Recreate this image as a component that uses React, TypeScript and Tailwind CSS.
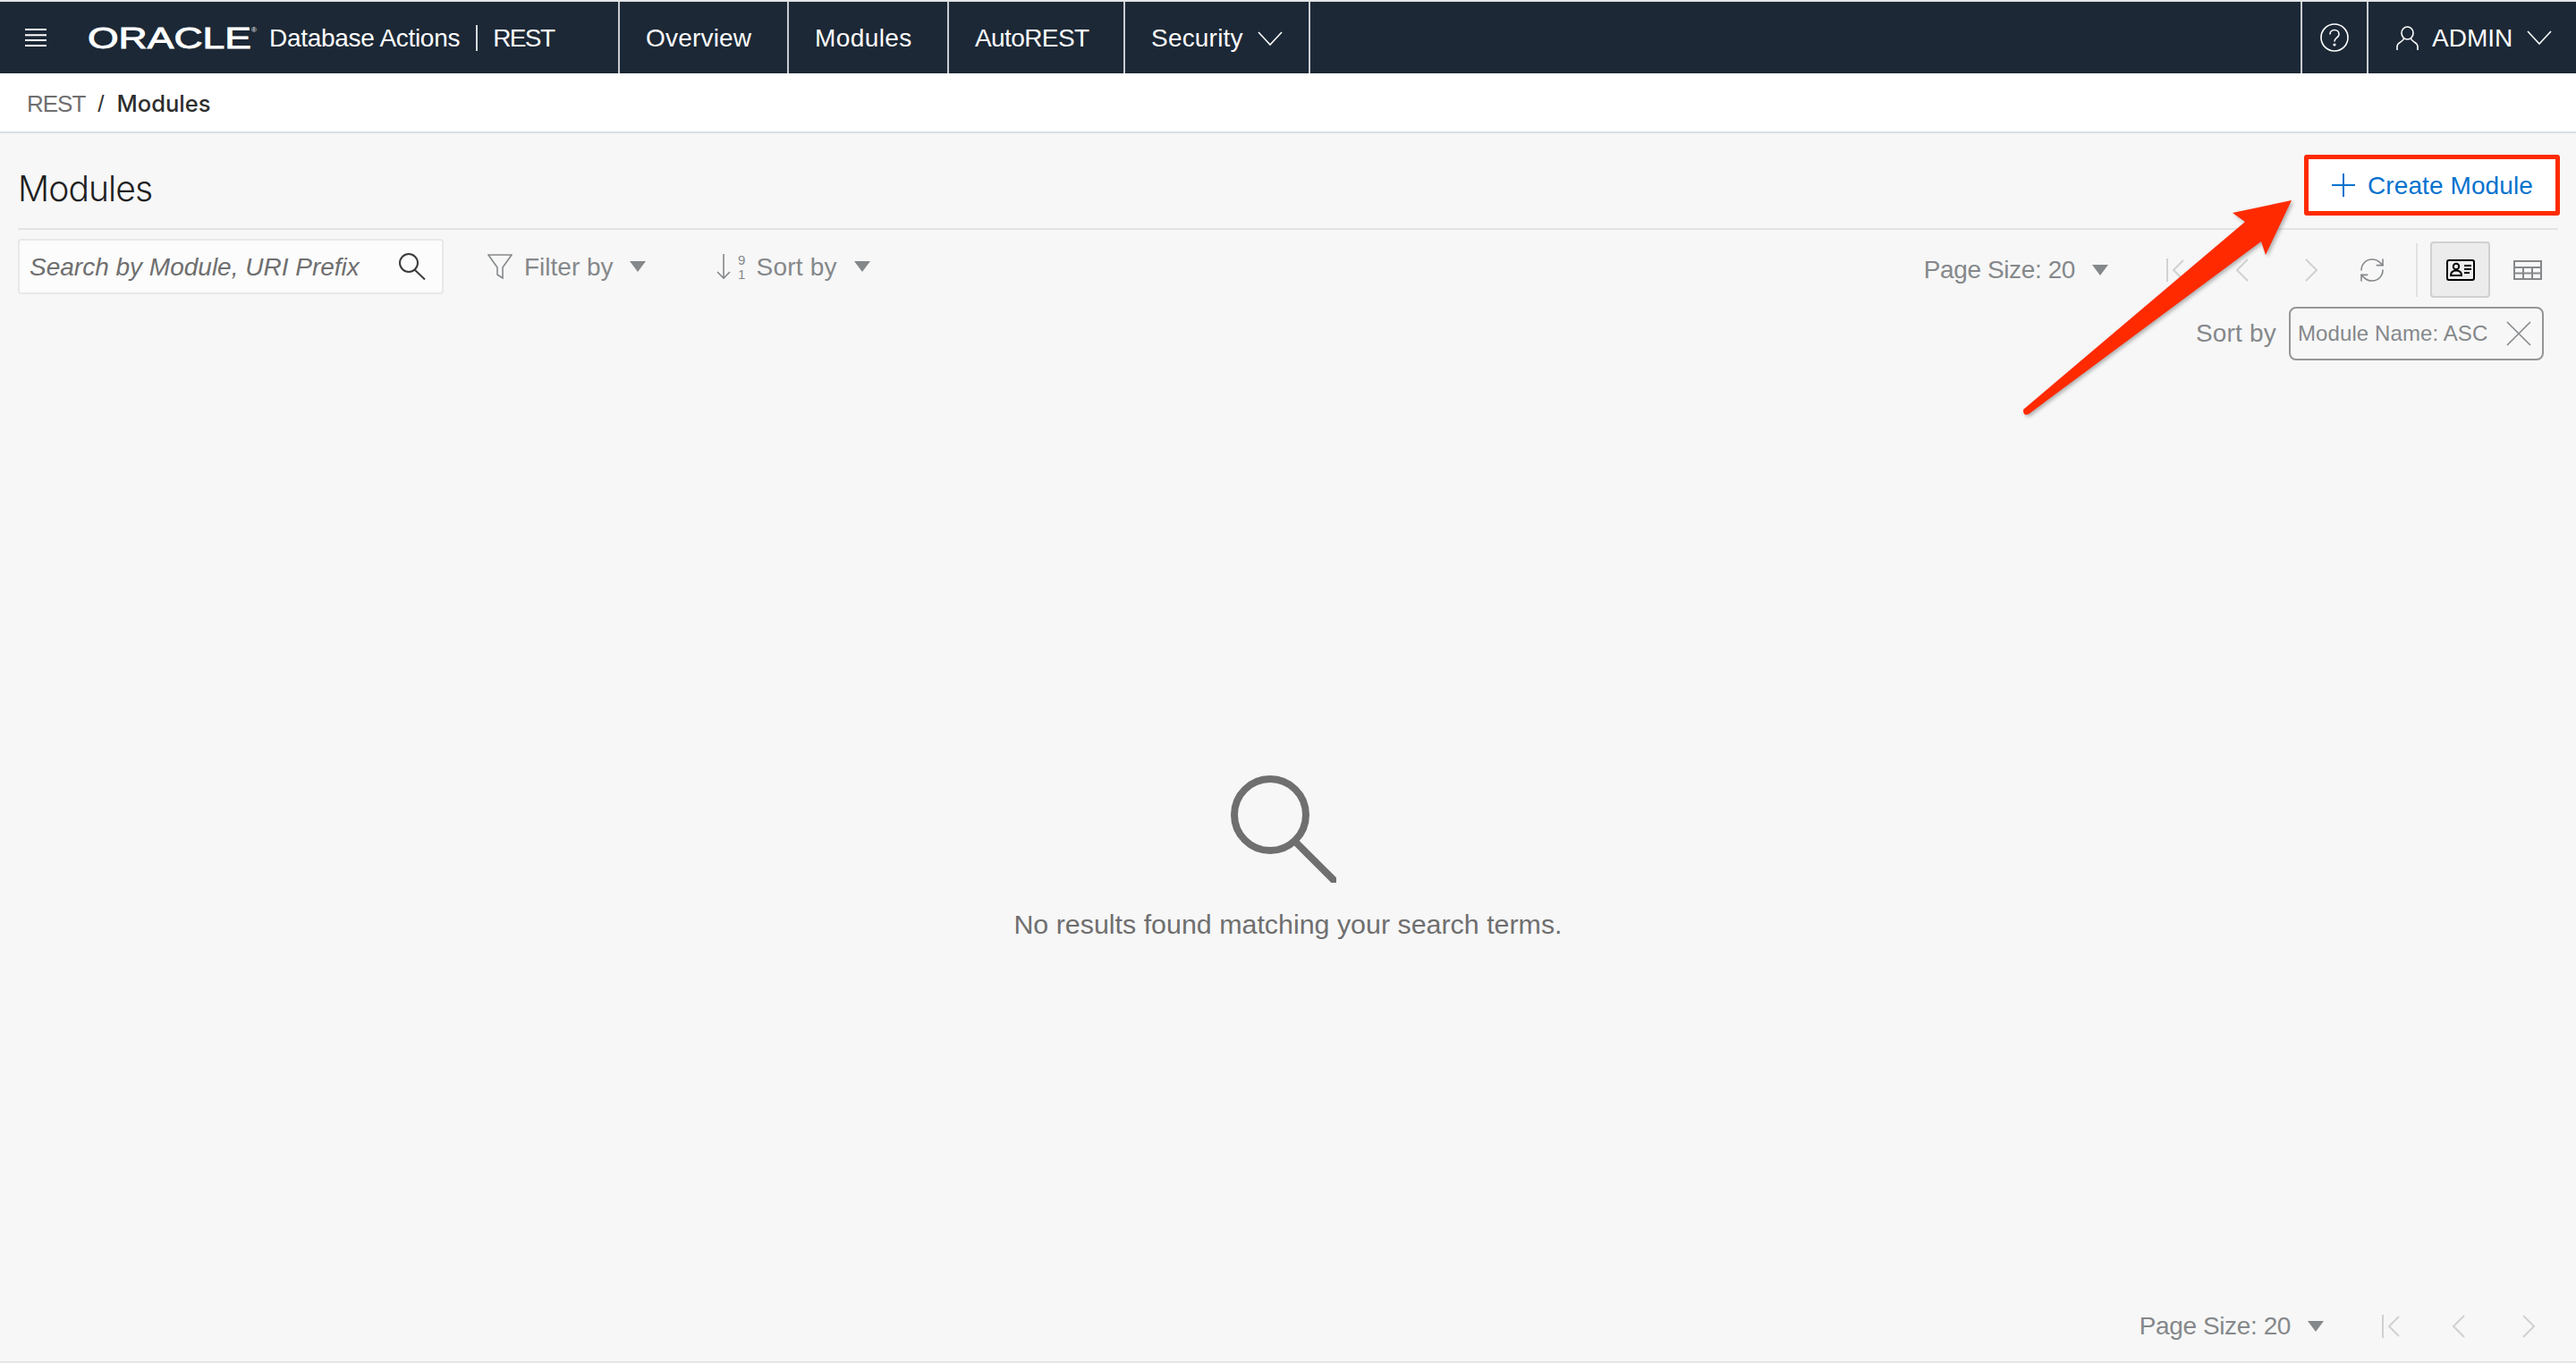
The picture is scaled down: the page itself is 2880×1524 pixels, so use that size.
import * as React from "react";
import { RefreshCw } from "lucide-react";

const Chevron = () => (
  <svg width="28" height="16" viewBox="0 0 28 16" fill="none" stroke="#fff" strokeWidth="1.6">
    <path d="M1 1l13 14L27 1" />
  </svg>
);

const Caret = () => <div className="w-0 h-0 border-l-[9px] border-r-[9px] border-t-[12px] border-l-transparent border-r-transparent border-t-[#85888b]" />;

const PagerIcons = ({ gapOne, gapTwo }: { gapOne: string; gapTwo: string }) => (
  <>
    <svg width="20" height="26" viewBox="0 0 20 26" fill="none" stroke="#d0d1d2" strokeWidth="2">
      <path d="M1 0v26M19 2L8 13l11 11" />
    </svg>
    <svg width="15" height="26" viewBox="0 0 15 26" fill="none" stroke="#d0d1d2" strokeWidth="2" className={gapOne}>
      <path d="M14 1L2 13l12 12" />
    </svg>
    <svg width="15" height="26" viewBox="0 0 15 26" fill="none" stroke="#d0d1d2" strokeWidth="2" className={gapTwo}>
      <path d="M1 1l12 12L1 25" />
    </svg>
  </>
);

const PageSize = () => (
  <>
    <span className="text-[28px] leading-none text-[#85888b] tracking-[-0.4px]">Page Size: 20</span>
    <div className="ml-[19px]">
      <Caret />
    </div>
  </>
);

const navItems = [
  { label: "Overview", width: "w-[189px]", track: "tracking-[0.2px]" },
  { label: "Modules", width: "w-[179px]", track: "tracking-[0.4px]" },
  { label: "AutoREST", width: "w-[197px]", track: "tracking-[-0.6px]" },
];

export default function App() {
  return (
    <div className="relative w-[2880px] h-[1524px] flex flex-col overflow-hidden bg-[#f7f7f7] font-['Liberation_Sans',Arial,sans-serif]">
      <div className="h-[2px] bg-[#e2e4e6]" />
      <header className="h-[80px] flex items-stretch bg-[#1c2836] text-white text-[28px]">
        <div className="w-[691px] flex items-center">
          <svg width="24" height="20" viewBox="0 0 24 20" stroke="#fff" strokeWidth="2" className="ml-[28px]">
            <path d="M0 1h24M0 7.300h24M0 13h24M0 19h24" />
          </svg>
          <svg width="192" height="34" viewBox="0 0 192 34" className="ml-[46px] shrink-0 overflow-visible">
            <text x="0" y="29" fill="#fff" stroke="#fff" strokeWidth="0.9" fontSize="33" textLength="183" lengthAdjust="spacingAndGlyphs" fontFamily="Liberation Sans">ORACLE</text>
            <text x="183" y="11" fill="#fff" fontSize="8" fontFamily="Liberation Sans">®</text>
          </svg>
          <span className="ml-[11px] pt-[2px] tracking-[-0.3px]">Database Actions</span>
          <div className="ml-[18px] w-[2px] h-[29px] bg-[#d5d8db]" />
          <span className="ml-[17px] pt-[2px] tracking-[-1.6px]">REST</span>
        </div>
        {navItems.map((item) => (
          <div key={item.label} className={`${item.width} ${item.track} border-l-2 border-[#c9ccd0] pl-[29px] pt-[2px] flex items-center`}>
            {item.label}
          </div>
        ))}
        <div className="w-[209px] border-x-2 border-[#c9ccd0] pl-[29px] pt-[2px] flex items-center tracking-[0.2px]">
          Security
          <span className="ml-[16px]">
            <Chevron />
          </span>
        </div>
        <div className="ml-auto w-[74px] border-l-2 border-[#c9ccd0] flex items-center justify-center">
          <svg width="32" height="32" viewBox="0 0 32 32" fill="none" stroke="#fff" strokeWidth="1.6">
            <circle cx="16" cy="16" r="15" />
            <path d="M11 12.500c0-3 2.200-5 5-5s5 2 5 4.700c0 4-5 4-5 8.300" />
            <circle cx="16" cy="24" r="0.8" fill="#fff" />
          </svg>
        </div>
        <div className="w-[234px] border-l-2 border-[#c9ccd0] pl-[31px] flex items-center">
          <svg width="25" height="27" viewBox="0 0 25 27" fill="none" stroke="#fff" strokeWidth="1.6">
            <ellipse cx="12.500" cy="8" rx="6.500" ry="7" />
            <path d="M8.500 14C8 18 1 18 1 23v4M16.500 14c.5 4 7.500 4 7.500 9v4" />
          </svg>
          <span className="ml-[15px] pt-[2px]">ADMIN</span>
          <span className="ml-[16px]">
            <Chevron />
          </span>
        </div>
      </header>

      <div className="h-[67px] bg-white border-b-2 border-[#d6dfe6] flex items-center pl-[30px] text-[26px] pt-[3px]">
        <span className="text-[#6f6f6f] tracking-[-1px]">REST</span>
        <span className="mx-[14px] text-[#333]">/</span>
        <span className="text-[#2e2e2e] font-medium font-['Inter',sans-serif] text-[25.500px]">Modules</span>
      </div>

      <div className="px-[20px]">
        <div className="h-[108px] border-b-2 border-[#e3e3e3] flex items-center justify-between">
          <h1 className="font-['Inter',sans-serif] font-light text-[39px] tracking-[-0.9px] text-[#1f1f1f] leading-none mt-[16px]">Modules</h1>
          <button className="w-[286px] h-[68px] mt-[10px] mr-[-2px] bg-white border-[5px] border-[#ff2a00] rounded-[3px] flex items-center pl-[26px] text-[28px] text-[#0572ce]">
            <svg width="26" height="26" viewBox="0 0 26 26" stroke="#0572ce" strokeWidth="2">
              <path d="M13 0v26M0 13h26" />
            </svg>
            <span className="ml-[14px] pt-[2px] tracking-[0.1px]">Create Module</span>
          </button>
        </div>

        <div className="flex justify-between">
          <div className="flex items-center h-[62px] mt-[10px] text-[28px] text-[#85888b]">
            <div className="w-[476px] h-[62px] bg-[#fcfcfc] border-2 border-[#e8e8e8] rounded-[4px] flex items-center justify-between pl-[11px] pr-[18px]">
              <span className="italic text-[#6f6f6f] pt-[2px] tracking-[0px]">Search by Module, URI Prefix</span>
              <svg width="30" height="30" viewBox="0 0 30 30" fill="none" stroke="#3b3b3b" strokeWidth="2">
                <circle cx="11" cy="11" r="10" />
                <path d="M17.500 18.500L29 29.500" />
              </svg>
            </div>
            <svg width="28" height="28" viewBox="0 0 28 28" fill="none" stroke="#85888b" strokeWidth="1.6" className="ml-[49px]">
              <path d="M1 1h26L17 15v12l-6-4v-8z" />
            </svg>
            <span className="ml-[13px] pt-[1px]">Filter by</span>
            <div className="ml-[18px]">
              <Caret />
            </div>
            <svg width="34" height="32" viewBox="0 0 34 32" fill="none" stroke="#85888b" strokeWidth="1.6" className="ml-[78px] overflow-visible">
              <path d="M9 2v27M2 22l7 7 7-7" />
              <text x="25" y="14" fontSize="15" fill="#85888b" stroke="none" fontFamily="Liberation Sans">9</text>
              <text x="25" y="30" fontSize="15" fill="#85888b" stroke="none" fontFamily="Liberation Sans">1</text>
            </svg>
            <span className="ml-[12px] pt-[1px] tracking-[0.2px]">Sort by</span>
            <div className="ml-[19px]">
              <Caret />
            </div>
          </div>

          <div className="flex flex-col items-end pr-[18px]">
            <div className="flex items-center h-[63px] mt-[13px]">
              <PageSize />
              <div className="ml-[65px] flex items-center">
                <PagerIcons gapOne="ml-[57px]" gapTwo="ml-[63px]" />
              </div>
              <RefreshCw size={32} strokeWidth={1.2} color="#85888b" className="ml-[44px]" />
              <div className="ml-[33px] w-[2px] h-[60px] bg-[#e2e2e2]" />
              <div className="ml-[14px] w-[67px] h-[63px] bg-[#ececec] border-2 border-[#d0d0d0] rounded-[4px] flex items-center justify-center">
                <svg width="32" height="24" viewBox="0 0 32 24" fill="none" stroke="#000" strokeWidth="2">
                  <rect x="1" y="1" width="30" height="22" rx="2" />
                  <circle cx="11" cy="8" r="3.200" />
                  <path d="M5 18c0-4 3-5.500 6-5.500s6 1.500 6 5.500zM20 7h8M20 11h8M20 15h6" />
                </svg>
              </div>
              <svg width="32" height="22" viewBox="0 0 32 22" fill="none" stroke="#85888b" strokeWidth="2" className="ml-[26px]">
                <path d="M1 1h30v20H1zM1 8h30M1 14.500h30M11 8v13M21 8v13" />
              </svg>
            </div>
            <div className="flex items-center mt-[10px] mr-[-2px]">
              <span className="text-[28px] text-[#85888b] tracking-[0.2px]">Sort by</span>
              <div className="ml-[14px] w-[285px] h-[60px] border-2 border-[#969696] rounded-[8px] flex items-center pl-[8px] text-[24px] text-[#85888b] tracking-[0.1px]">
                Module Name: ASC
                <svg width="28" height="28" viewBox="0 0 28 28" stroke="#85888b" strokeWidth="1.6" className="ml-[21px]">
                  <path d="M1 1l26 26M27 1L1 27" />
                </svg>
              </div>
            </div>
          </div>
        </div>
      </div>

      <div className="mt-[464px] flex flex-col items-center">
        <svg width="118" height="120" viewBox="0 0 118 120" fill="none" stroke="#6f6f6f" strokeWidth="8" strokeLinecap="round" className="mr-[10px]">
          <circle cx="44" cy="44" r="40" />
          <path d="M74 76l42 42" />
        </svg>
        <p className="mt-[31px] text-[30.400px] leading-none text-[#6f6f6f]">No results found matching your search terms.</p>
      </div>

      <div className="mt-auto h-[66px] border-b-2 border-[#e6e6e6] flex items-center justify-end pr-[45px] pb-[14px]">
        <PageSize />
        <div className="ml-[65px] flex items-center">
          <PagerIcons gapOne="ml-[58px]" gapTwo="ml-[64px]" />
        </div>
      </div>

      {/* the red annotation arrow lies over the toolbar */}
      <svg viewBox="2240 210 340 270" className="absolute left-[2240px] top-[210px] w-[340px] h-[270px] drop-shadow-[2px_2px_2px_rgba(0,0,0,0.3)]">
        <path d="M2262 458L2510 248L2496 238L2562 224L2533 285L2528 270L2268 463Q2262 466 2262 458Z" fill="#ff2a00" />
      </svg>
    </div>
  );
}
